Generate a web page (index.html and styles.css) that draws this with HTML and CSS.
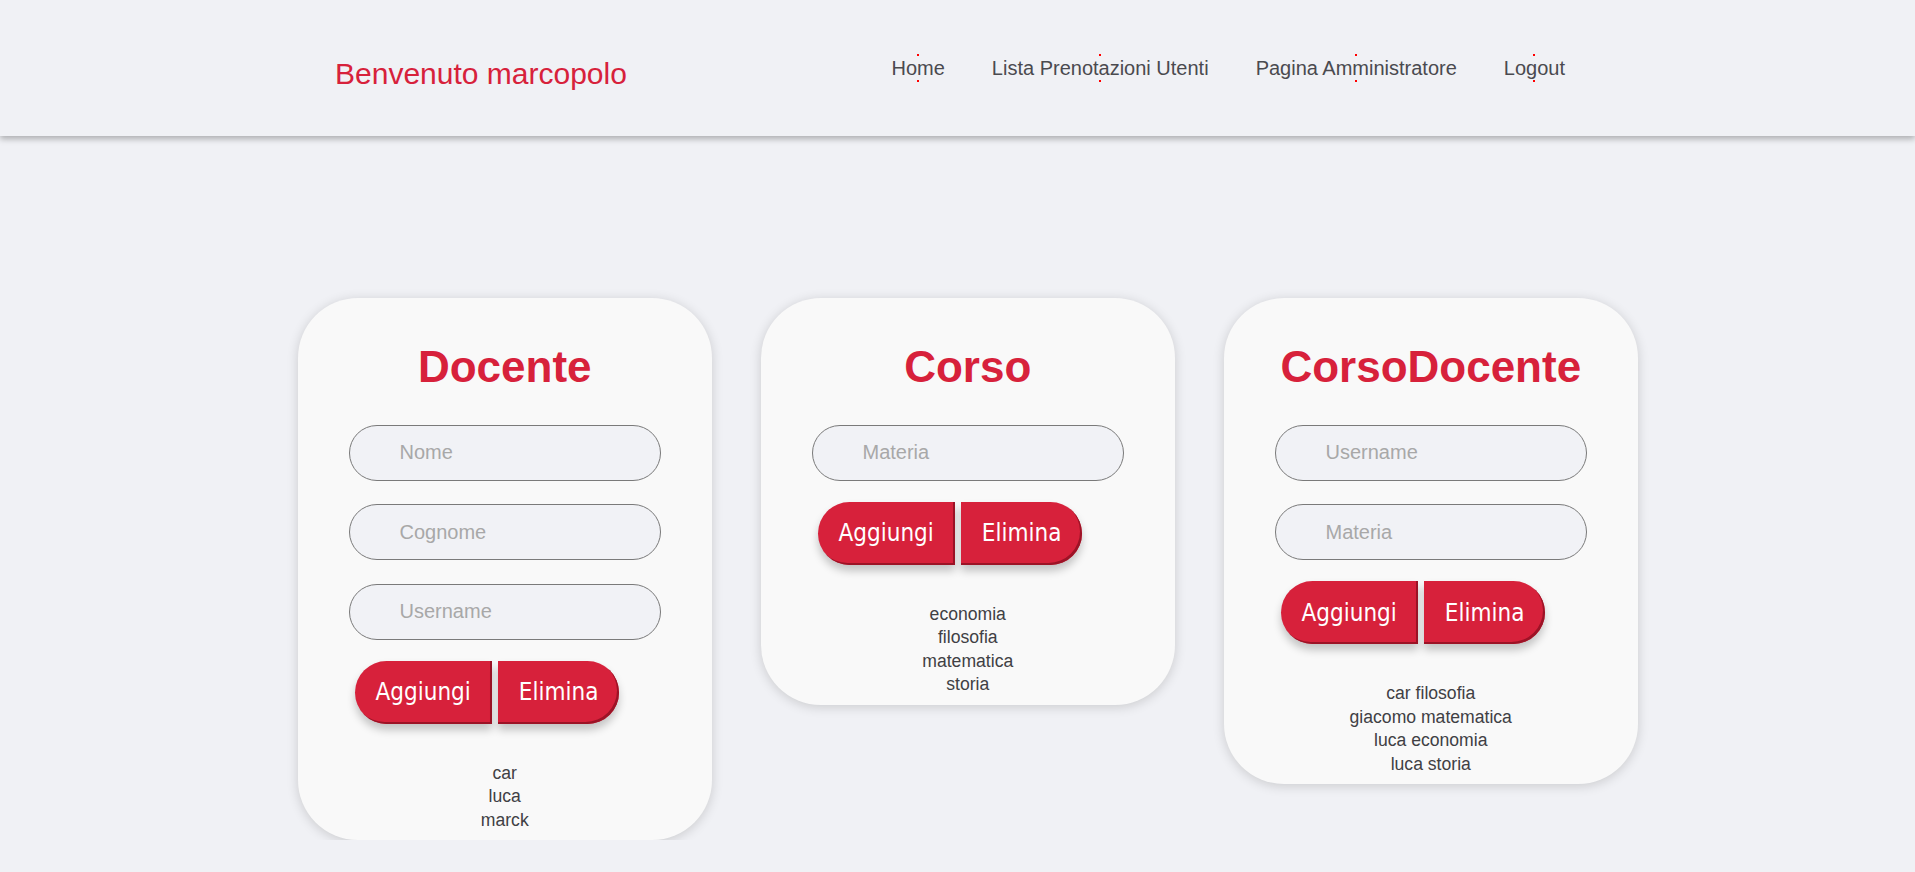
FILE: index.html
```html
<!DOCTYPE html>
<html lang="it">
<head>
<meta charset="utf-8">
<title>Amministratore</title>
<link rel="stylesheet" href="styles.css">
</head>
<body>
<header class="topbar">
  <div class="welcome">Benvenuto marcopolo</div>
  <nav class="nav">
    <a class="nav-link" href="#">Home</a>
    <a class="nav-link" href="#">Lista Prenotazioni Utenti</a>
    <a class="nav-link" href="#">Pagina Amministratore</a>
    <a class="nav-link" href="#">Logout</a>
  </nav>
</header>
<main class="cards">
  <section class="card">
    <h1 class="card-title">Docente</h1>
    <div class="form">
      <input class="field" type="text" placeholder="Nome">
      <input class="field" type="text" placeholder="Cognome">
      <input class="field" type="text" placeholder="Username">
      <div class="actions">
        <button class="btn btn-left">Aggiungi</button>
        <button class="btn btn-right">Elimina</button>
      </div>
    </div>
    <div class="list">
      <div>car</div>
      <div>luca</div>
      <div>marck</div>
    </div>
  </section>
  <section class="card">
    <h1 class="card-title">Corso</h1>
    <div class="form">
      <input class="field" type="text" placeholder="Materia">
      <div class="actions">
        <button class="btn btn-left">Aggiungi</button>
        <button class="btn btn-right">Elimina</button>
      </div>
    </div>
    <div class="list">
      <div>economia</div>
      <div>filosofia</div>
      <div>matematica</div>
      <div>storia</div>
    </div>
  </section>
  <section class="card">
    <h1 class="card-title">CorsoDocente</h1>
    <div class="form">
      <input class="field" type="text" placeholder="Username">
      <input class="field" type="text" placeholder="Materia">
      <div class="actions">
        <button class="btn btn-left">Aggiungi</button>
        <button class="btn btn-right">Elimina</button>
      </div>
    </div>
    <div class="list">
      <div>car filosofia</div>
      <div>giacomo matematica</div>
      <div>luca economia</div>
      <div>luca storia</div>
    </div>
  </section>
</main>
</body>
</html>
```
FILE: styles.css
```css
* { box-sizing: border-box; }

html, body {
  margin: 0;
  padding: 0;
  background: #f0f1f5;
  font-family: "Liberation Sans", Arial, sans-serif;
  color: #444;
}

.topbar {
  height: 136px;
  display: flex;
  align-items: center;
  justify-content: space-between;
  padding: 0 350px 0 335px;
  background: #f0f1f5;
  box-shadow: 0 3px 6px rgba(0, 0, 0, 0.28);
}

.welcome {
  font-size: 30px;
  color: #d7213b;
  padding-top: 11px;
}

.nav {
  display: flex;
  gap: 47px;
}

.nav-link {
  position: relative;
  font-size: 20px;
  color: #4a4a4f;
  text-decoration: none;
}

.nav-link::before,
.nav-link::after {
  content: "";
  position: absolute;
  left: 50%;
  width: 2px;
  height: 2px;
  margin-left: -1px;
  background: #ff0000;
}

.nav-link::before { top: -3px; }
.nav-link::after { bottom: -2px; }

.cards {
  display: flex;
  align-items: flex-start;
  gap: 49.5px;
  padding: 162px 0 0 298px;
}

.card {
  width: 413.5px;
  background: #f9f9f9;
  border-radius: 60px;
  box-shadow: 0 2px 12px rgba(0, 0, 0, 0.16);
  padding: 44px 50.5px 8px;
}

.card-title {
  margin: 0 0 32.5px;
  font-size: 44px;
  font-weight: bold;
  color: #d7213b;
  text-align: center;
  line-height: normal;
}

.form {
  display: flex;
  flex-direction: column;
  align-items: flex-start;
}

.field {
  width: 312.5px;
  height: 56px;
  margin: 0 0 23.5px;
  padding: 0 0 0 50px;
  border: 1px solid #7a7a7a;
  border-radius: 28px;
  background: #f1f2f6;
  font-family: "Liberation Sans", Arial, sans-serif;
  font-size: 20px;
  color: #333;
  outline: none;
}

.field::placeholder { color: #a8a8a8; }

.form .field:last-of-type { margin-bottom: 21px; }

.actions {
  display: flex;
  gap: 6px;
  padding-left: 6px;
}

.btn {
  height: 63px;
  padding: 0 21px;
  border: none;
  background: #d7213b;
  color: #fff;
  font-family: "DejaVu Sans Condensed", "DejaVu Sans", Lato, sans-serif;
  font-stretch: condensed;
  font-size: 24px;
  box-shadow: inset -2px -2px 0 #9c1326, 0 6px 9px rgba(0, 0, 0, 0.22);
  cursor: pointer;
}

.btn-left { border-radius: 32px 0 0 32px; }
.btn-right { border-radius: 0 32px 32px 0; }

.list {
  padding-top: 38px;
  text-align: center;
  font-size: 17.6px;
  line-height: 23.6px;
  color: #404044;
}
```
